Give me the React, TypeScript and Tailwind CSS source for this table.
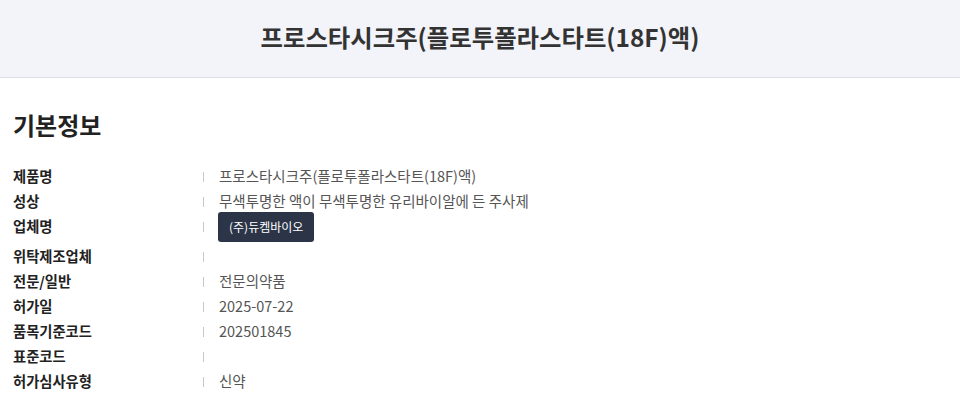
import React from 'react';

const font = { fontFamily: '"Noto Sans CJK KR", "Noto Sans", sans-serif' };

export default function App() {
  const rows: { label: string; value?: string; company?: boolean }[] = [
    { label: '제품명', value: '프로스타시크주(플로투폴라스타트(18F)액)' },
    { label: '성상', value: '무색투명한 액이 무색투명한 유리바이알에 든 주사제' },
    { label: '업체명', company: true },
    { label: '위탁제조업체' },
    { label: '전문/일반', value: '전문의약품' },
    { label: '허가일', value: '2025-07-22' },
    { label: '품목기준코드', value: '202501845' },
    { label: '표준코드' },
    { label: '허가심사유형', value: '신약' },
  ];

  return (
    <div className="w-[960px] h-[418px] bg-white overflow-hidden" style={font}>
      {/* Title bar */}
      <header className="h-[78px] bg-[#f3f4f9] border-b border-[#dcdde3] flex items-center justify-center">
        <h1 className="text-[24.4px] font-bold text-[#333] mt-[-2px]">
          프로스타시크주(플로투폴라스타트(18F)액)
        </h1>
      </header>

      <section className="px-[13px] pt-[30px]">
        <h2 className="text-[24px] font-bold text-[#222] leading-[34px] mb-[22px]">기본정보</h2>

        <div className="flex flex-col">
          {rows.map((r) => (
            <div key={r.label} className={`flex items-start ${r.company ? 'h-[30px]' : 'h-[25px]'}`}>
              <div className="w-[190px] text-[14.3px] font-bold text-[#222] leading-[24px]">{r.label}</div>
              <div className="h-[25px] flex items-center">
                <span className="w-px h-[10px] bg-[#c8c8c8]"></span>
              </div>
              <div className="ml-[15px] text-[14.5px] text-[#555] leading-[24px]">
                {r.company ? (
                  <button className="ml-[-1px] mt-[-6px] h-[30px] px-[11px] rounded-[3px] bg-[#2c3447] text-white text-[12px] leading-[30px]">
                    (주)듀켐바이오
                  </button>
                ) : (
                  r.value
                )}
              </div>
            </div>
          ))}
        </div>
      </section>
    </div>
  );
}
